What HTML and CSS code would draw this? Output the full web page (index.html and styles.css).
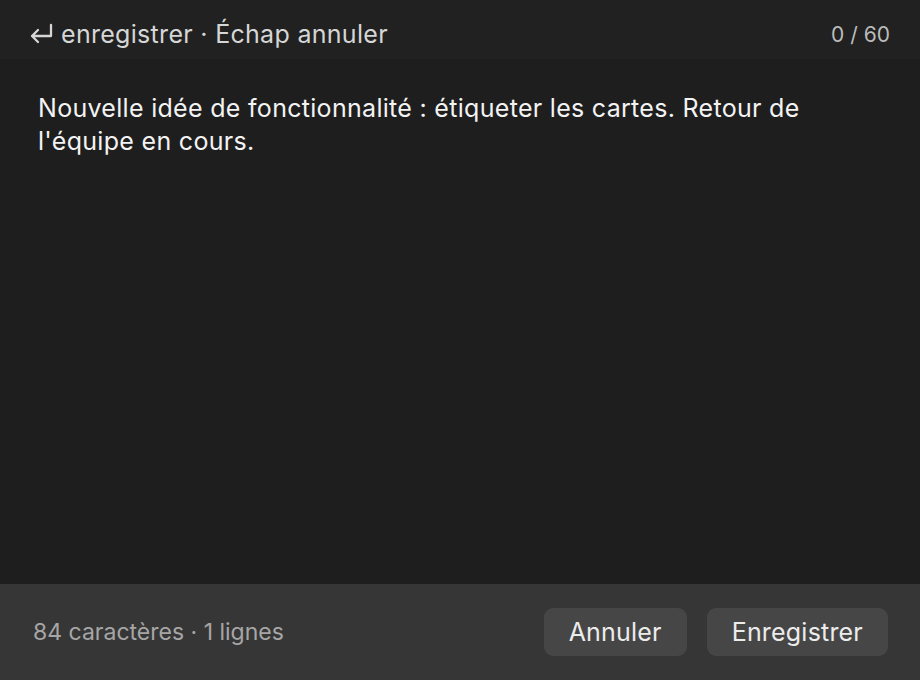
FILE: index.html
```html
<!DOCTYPE html>
<html lang="fr">
<head>
<meta charset="utf-8">
<link rel="stylesheet" href="styles.css">
</head>
<body>
<div class="editor">
  <div class="topbar">
    <div class="hint">
      <svg class="enter" width="24" height="22" viewBox="0 0 24 22"><path d="M22 2V13H3M9 7L3 13L9 19" fill="none" stroke="currentColor" stroke-width="2.3" stroke-linecap="round" stroke-linejoin="round"/></svg>
      <span>enregistrer · Échap annuler</span>
    </div>
    <div class="count">0 / 60</div>
  </div>
  <div class="content">
    <p class="text">Nouvelle idée de fonctionnalité : étiqueter les cartes. Retour de l'équipe en cours.</p>
  </div>
  <div class="footer">
    <div class="stats">84 caractères · 1 lignes</div>
    <div class="actions">
      <button class="btn">Annuler</button>
      <button class="btn">Enregistrer</button>
    </div>
  </div>
</div>
</body>
</html>
```
FILE: styles.css
```css
* { box-sizing: border-box; }
html, body { margin: 0; height: 100%; }
body {
  background: #1e1e1e;
  font-family: Inter, "Noto Sans", sans-serif;
}
.editor {
  display: flex;
  flex-direction: column;
  height: 680px;
  width: 920px;
}
.topbar {
  height: 59px;
  flex: none;
  background: #212121;
  display: flex;
  align-items: center;
  justify-content: space-between;
  padding: 9px 30px 0 29px;
}
.hint {
  display: flex;
  align-items: center;
  gap: 8px;
  color: #d6d6d6;
  font-size: 25px;
  letter-spacing: 0.3px;
}
.enter { color: #d6d6d6; display: block; }
.count {
  color: #bcbcbc;
  font-size: 21px;
}
.content {
  flex: 1;
  padding: 33px 38px;
}
.text {
  margin: 0;
  color: #f3f3f3;
  font-size: 25px;
  line-height: 33px;
  letter-spacing: 0.3px;
  max-width: 810px;
}
.footer {
  height: 96px;
  flex: none;
  background: #363636;
  display: flex;
  align-items: center;
  justify-content: space-between;
  padding: 0 32px 0 33px;
}
.stats {
  color: #a6a6a6;
  font-size: 23px;
}
.actions {
  display: flex;
  gap: 20px;
}
.btn {
  height: 48px;
  border: none;
  border-radius: 9px;
  background: #464646;
  color: #ececec;
  font-family: inherit;
  font-size: 25px;
  letter-spacing: 0.2px;
  padding: 0 25px;
}
```
